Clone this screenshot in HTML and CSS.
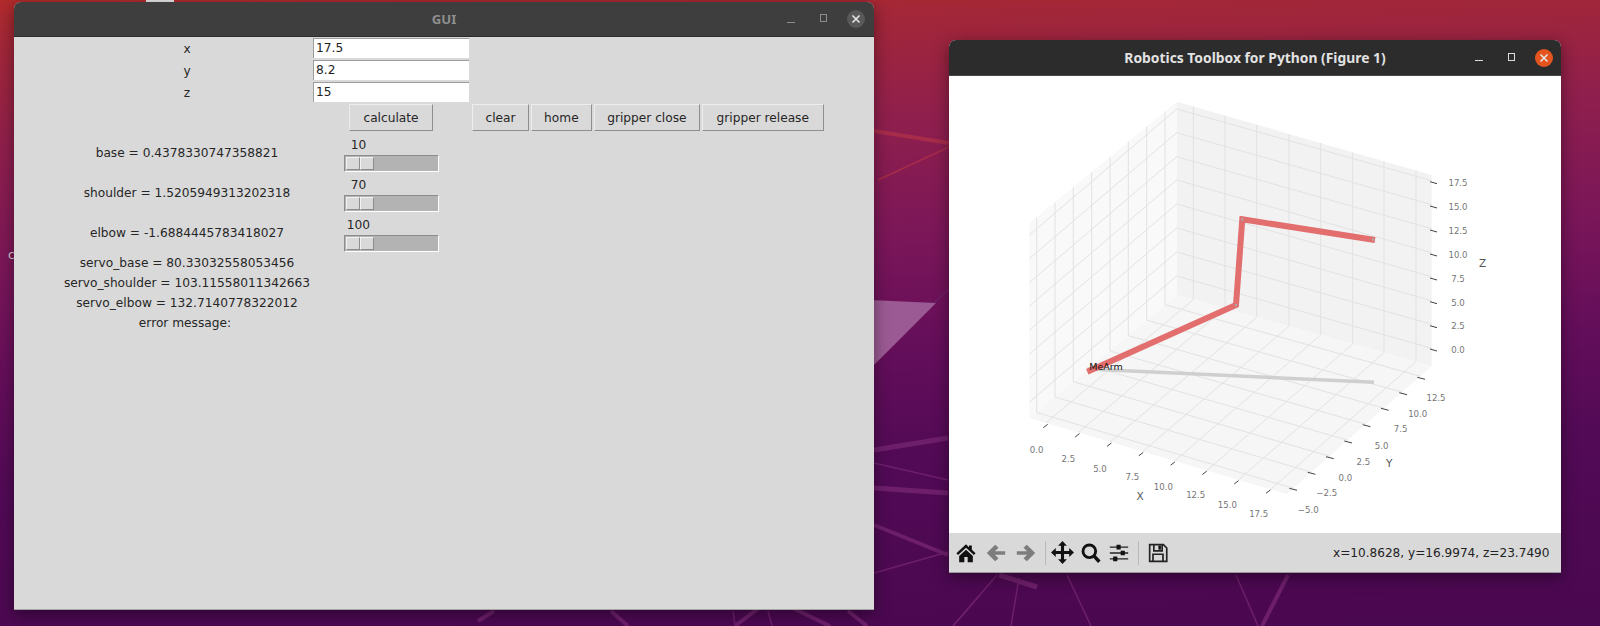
FILE: index.html
```html
<!DOCTYPE html>
<html lang="en">
<head>
<meta charset="utf-8">
<title>Desktop</title>
<link rel="stylesheet" href="styles.css">
</head>
<body>
<main class="desktop">
  <svg class="wallpaper" viewBox="0 0 1600 626" aria-hidden="true">
    <polygon class="wp-glass" points="870,300 936,303 870,369"/>
    <g class="wp-band">
      <path class="w5" d="M874 450L948 438"/>
      <path class="w2" d="M874 463L948 480"/>
      <path class="w5" d="M874 488L948 493"/>
      <path class="w4" d="M874 525L948 555"/>
      <path class="w2" d="M874 573L948 552"/>
      <path class="w2" d="M934 303L950 288"/>
      <path class="w5" d="M999 575L1037 587"/>
      <path class="w2" d="M997 575L953 626"/>
      <path class="w2" d="M1019 578L1011 626"/>
      <path class="w2" d="M1067 575L1091 626"/>
      <path class="w2" d="M1236 575L1258 626"/>
      <path class="w4" d="M1288 575L1262 626"/>
      <path class="w4" d="M494 611L478 621"/>
      <path class="w4" d="M611 611L628 626"/>
      <path class="w4" d="M735 626L772 598L830 626"/>
      <path class="w2" d="M733 611L735 626"/>
      <path class="w2" d="M768 611L772 626"/>
      <path class="w4" d="M848 611L867 626"/>
      <path class="w2" d="M979 596L953 626"/>
    </g>
    <path class="wp-red" d="M874 131L949 143"/>
    <path class="wp-red thin" d="M878 180L949 147"/>
  </svg>
  <div class="peek-tab"></div>
  <span class="peek-letter">c</span>

  <section class="window gui-window">
    <header class="titlebar gui-bar">
      <span></span>
      <h1 class="title gui-title">GUI</h1>
      <div class="controls">
        <span class="ctl"><i class="ctl-min"></i></span>
        <span class="ctl"><i class="ctl-max"></i></span>
        <span class="ctl ctl-close gui-close">
          <svg viewBox="0 0 10 10" class="ctl-x"><path d="M1.5 1.5L8.5 8.5M8.5 1.5L1.5 8.5"/></svg>
        </span>
      </div>
    </header>
    <div class="gui-body">
      <div class="lbl r1">x</div>
      <div class="entry r1">17.5</div>
      <div class="lbl r2">y</div>
      <div class="entry r2">8.2</div>
      <div class="lbl r3">z</div>
      <div class="entry r3">15</div>

      <div class="btn btn-calc r4">calculate</div>
      <div class="btn-row r4">
        <div class="btn">clear</div>
        <div class="btn">home</div>
        <div class="btn">gripper close</div>
        <div class="btn btn-last">gripper release</div>
      </div>

      <div class="lbl r5">base = 0.4378330747358821</div>
      <div class="scale r5">
        <div class="scale-value">10</div>
        <div class="trough"><div class="handle"><span></span><span></span></div></div>
      </div>
      <div class="lbl r6">shoulder = 1.5205949313202318</div>
      <div class="scale r6">
        <div class="scale-value">70</div>
        <div class="trough"><div class="handle"><span></span><span></span></div></div>
      </div>
      <div class="lbl r7">elbow = -1.6884445783418027</div>
      <div class="scale r7">
        <div class="scale-value">100</div>
        <div class="trough"><div class="handle"><span></span><span></span></div></div>
      </div>

      <div class="lbl r8">servo_base = 80.33032558053456</div>
      <div class="lbl r9">servo_shoulder = 103.11558011342663</div>
      <div class="lbl r10">servo_elbow = 132.7140778322012</div>
      <div class="lbl lbl-error r11">error message:</div>
    </div>
  </section>

  <section class="window fig-window">
    <header class="titlebar fig-bar">
      <span></span>
      <h2 class="title fig-title">Robotics Toolbox for Python (Figure 1)</h2>
      <div class="controls">
        <span class="ctl"><i class="ctl-min bright"></i></span>
        <span class="ctl"><i class="ctl-max bright"></i></span>
        <span class="ctl ctl-close fig-close">
          <svg viewBox="0 0 10 10" class="ctl-x"><path d="M1.5 1.5L8.5 8.5M8.5 1.5L1.5 8.5"/></svg>
        </span>
      </div>
    </header>
    <svg class="plot" viewBox="949 76 612 457" role="img" aria-label="3D plot of the MeArm">
      <polygon class="pane-left" points="1176.7,101.7 1029.3,223.3 1029.3,418 1176.7,295"/>
      <polygon class="pane-right" points="1176.7,101.7 1431.7,175 1431.7,366 1176.7,295"/>
      <polygon class="pane-floor" points="1176.7,295 1431.7,366 1286.7,494 1029.3,418"/>
      <path class="grid" d="M1193.3 106.5V299.6L1046.7 422.2M1225 115.6V308.4L1078.5 432.4M1256.7 124.6V317.2L1110.3 441.8M1289 134V326.2L1143 451.4M1320.7 143V335L1174.8 460.9M1352.7 152.3V344L1207 470.4M1384 161.3V352.7L1238.7 479.8M1416 170.5V361.6L1270.8 489.3"/>
      <path class="grid" d="M1165 111.4V304.8L1420.1 376.2M1146.7 126.6V320.2L1402 392.2M1128.3 141.8V335.6L1383.9 408.2M1110 157V351L1365.7 424.2M1091.7 172.2V366.3L1347.6 440.2M1073.3 187.4V381.7L1329.5 456.2M1055 202.6V397.1L1311.4 472.2M1036.7 217.8V412.5L1293.2 488.2"/>
      <path class="grid" d="M1431.7 180.7L1176.7 109L1029.3 235M1431.7 204.7L1176.7 132.7L1029.3 258.7M1431.7 228.7L1176.7 156.7L1029.3 282.7M1431.7 252.7L1176.7 180L1029.3 306M1431.7 276.7L1176.7 204L1029.3 330M1431.7 300.7L1176.7 228L1029.3 354M1431.7 324.3L1176.7 252L1029.3 378M1431.7 348.3L1176.7 276L1029.3 402"/>

      <path class="ticks" d="M1430 181.7l7 2M1430 206l7 2M1430 230l7 2M1430 254l7 2M1430 278l7 2M1430 301.7l7 2M1430 325.7l7 2M1430 349l7 2"/>
      <path class="ticks" d="M1417.3 377.3l7.7 2M1399.3 392.7l7.7 2M1381 408.3l7.7 2M1362.7 424.7l7.7 2M1344.3 441l7.7 2M1326 456.7l7.7 2M1307.7 472.3l7.7 2M1289.3 488.3l7.7 2"/>
      <path class="ticks" d="M1043.3 427.7l4.4-3.4M1075.1 437l4.4-3.4M1107 446.4l4.4-3.4M1138.8 455.8l4.4-3.4M1170.6 465.2l4.4-3.4M1202.4 474.5l4.4-3.4M1234.2 484l4.4-3.4M1266 493.3l4.4-3.4"/>

      <path class="shadow-arm" d="M1087.3 369L1374 382.3"/>
      <path class="arm" d="M1087.3 371.7L1236 305L1242.3 219.3L1375 240"/>
      <g class="joints">
        <circle cx="1236" cy="305" r="1.2"/>
        <circle cx="1242.3" cy="219.5" r="1.2"/>
        <circle cx="1373" cy="239.5" r="1.2"/>
      </g>
      <text class="arm-name" x="1089.3" y="370">MeArm</text>

      <g class="tick-text">
        <text x="1458" y="183.3">17.5</text><text x="1458" y="207">15.0</text><text x="1458" y="231">12.5</text><text x="1458" y="255">10.0</text>
        <text x="1458" y="279">7.5</text><text x="1458" y="302.7">5.0</text><text x="1458" y="326.3">2.5</text><text x="1458" y="350.3">0.0</text>
        <text x="1436" y="398">12.5</text><text x="1417.7" y="414">10.0</text><text x="1400.7" y="429.3">7.5</text><text x="1381.7" y="445.7">5.0</text>
        <text x="1363.3" y="462">2.5</text><text x="1345.3" y="478">0.0</text><text x="1326.7" y="493.3">−2.5</text><text x="1308.3" y="509.7">−5.0</text>
        <text x="1036.7" y="449.7">0.0</text><text x="1068.3" y="459.3">2.5</text><text x="1100" y="468.7">5.0</text><text x="1132.3" y="477.3">7.5</text>
        <text x="1163.3" y="486.7">10.0</text><text x="1195.7" y="495">12.5</text><text x="1227.3" y="505">15.0</text><text x="1258.7" y="514.3">17.5</text>
      </g>
      <g class="axis-text">
        <text x="1482.6" y="263">Z</text>
        <text x="1389.3" y="462.7">Y</text>
        <text x="1140" y="495.7">X</text>
      </g>
    </svg>
    <footer class="toolbar">
      <div class="tool-group wide">
        <span class="tool"><svg viewBox="0 0 24 24" class="ico"><path class="ink" d="M12 1.5L.5 12.2l2 2.2L12 5.6l9.5 8.8 2-2.2-4.5-4.2V3h-3.400v2L12 1.500zM12 8.200L3.800 15.600V23H10v-6.200h4V23h6.200v-7.400L12 8.200z"/></svg></span>
        <span class="tool"><svg viewBox="0 0 24 24" class="ico"><path class="ink-gray" d="M1 12L11 2l4 3.600-4.400 4.200H23v4.400H10.600l4.400 4.200L11 22z"/></svg></span>
        <span class="tool"><svg viewBox="0 0 24 24" class="ico"><path class="ink-gray" d="M23 12L13 2 9 5.600l4.400 4.200H1v4.400h12.400L9 18.400l4 3.600z"/></svg></span>
      </div>
      <span class="tool-sep first"></span>
      <div class="tool-group">
        <span class="tool"><svg viewBox="0 0 24 24" class="ico ico-move"><path class="ink" d="M12 0l4.600 5h-3v5.400H19v-3l5 4.600-5 4.600v-3h-5.400V19h3L12 24l-4.600-5h3v-5.400H5v3L0 12l5-4.600v3h5.400V5h-3z"/></svg></span>
        <span class="tool"><svg viewBox="0 0 24 24" class="ico"><circle class="line-heavy" cx="10" cy="10" r="7.600"/><path class="line-bold" d="M15.500 15.500L22 22.500"/></svg></span>
        <span class="tool"><svg viewBox="0 0 24 24" class="ico"><path class="line-thin" d="M1 5h22M1 12h22M1 19h22"/><path class="ink" d="M9 2.200h5v5.600H9zM14 9.200h5v5.600h-5zM5 16.200h5v5.600H5z"/></svg></span>
      </div>
      <span class="tool-sep second"></span>
      <span class="tool"><svg viewBox="0 0 24 24" class="ico"><path class="line-save" d="M2 2h16.500L22.500 6V22H2zM7 2v7.500h10V2M6 22v-8.500h12V22"/><path class="ink" d="M12.500 3h3v5h-3z"/></svg></span>
      <span class="status">x=10.8628, y=16.9974, z=23.7490</span>
    </footer>
  </section>
</main>
</body>
</html>
```
FILE: styles.css
```css
* { box-sizing: border-box; }
html, body { margin: 0; padding: 0; height: 100%; overflow: hidden; }
body { font-family: "DejaVu Sans", sans-serif; font-size: 12.2px; color: #262626; }

.desktop {
  position: relative;
  width: 1600px;
  height: 626px;
  overflow: hidden;
  background: linear-gradient(178deg, #b22b2b 0, #a32737 6%, #8f1f4d 22%, #7a1659 40%, #650e5a 55%, #520a56 72%, #4a0850 100%);
}
.wallpaper { position: absolute; inset: 0; width: 1600px; height: 626px; }
.wp-glass { fill: #9c5a94; }
.wp-band path { fill: none; stroke: #6e1f6b; }
.wp-band .w2 { stroke-width: 1.5; }
.wp-band .w4 { stroke-width: 4; }
.wp-band .w5 { stroke-width: 5; }
.wp-red { fill: none; stroke: #a62c4a; stroke-width: 4; }
.wp-red.thin { stroke-width: 1.5; }
.peek-tab { position: absolute; left: 146px; top: 0; width: 28px; height: 2px; background: #e8e8e8; }
.peek-letter { position: absolute; left: 8px; top: 248px; font-size: 12px; color: #d8d0d8; }

.window { position: absolute; display: flex; flex-direction: column; border-radius: 7px 7px 0 0; overflow: hidden; box-shadow: 0 4px 16px rgba(0, 0, 0, .42); }
.gui-window { left: 14px; top: 2px; width: 860px; height: 608px; background: #d9d9d9; border-bottom: 1px solid #a4a4a4; }
.fig-window { left: 949px; top: 40px; width: 612px; height: 533px; background: #fff; border-bottom: 1px solid #999; }

.titlebar { display: grid; grid-template-columns: 1fr auto 1fr; align-items: center; flex: none; }
.gui-bar { height: 35px; background: #3e3e3e; border-bottom: 1px solid #2b2b2b; padding: 0 9px; }
.fig-bar { height: 36px; background: #2c2c2c; border-bottom: 1px solid #474747; padding: 0 8.5px; }
.title { margin: 0; font-family: "Noto Sans", sans-serif; font-weight: 700; }
.gui-title { color: #8f8f8f; font-size: 13.2px; }
.fig-title { color: #e2e2e2; font-size: 13.85px; }
.controls { display: flex; justify-content: flex-end; gap: 14.5px; align-items: center; }
.ctl { width: 18px; height: 18px; display: flex; align-items: center; justify-content: center; border-radius: 50%; }
.ctl-min { display: block; width: 8px; height: 1px; background: #8d8d8d; margin-top: 6px; }
.ctl-max { display: block; width: 7px; height: 8px; border: 1px solid #8d8d8d; margin-top: -2px; }
.ctl-min.bright { background: #dcdcdc; }
.ctl-max.bright { border-color: #dcdcdc; }
.gui-close { background: #595959; }
.fig-close { background: #e4541f; }
.ctl-x { width: 10px; height: 10px; fill: none; stroke: #e6e6e6; stroke-width: 1.6; }

.gui-body {
  flex: 1;
  display: grid;
  padding: 1px 0 0 50px;
  grid-template-columns: 246px 156px 1fr;
  column-gap: 3px;
  grid-template-rows: 22px 22px 22px 29px 40px 40px 40px 19.5px 20px 20px 21.5px 1fr;
}
.r1 { grid-row: 1; } .r2 { grid-row: 2; } .r3 { grid-row: 3; } .r4 { grid-row: 4; }
.r5 { grid-row: 5; } .r6 { grid-row: 6; } .r7 { grid-row: 7; } .r8 { grid-row: 8; }
.r9 { grid-row: 9; } .r10 { grid-row: 10; } .r11 { grid-row: 11; }

.lbl { grid-column: 1; display: flex; align-items: center; justify-content: center; white-space: nowrap; }
.lbl-error { padding-right: 4px; }
.entry {
  grid-column: 2;
  height: 20px;
  padding-left: 2px;
  line-height: 19px;
  background: #fff;
  border-top: 1px solid #9d9d9d;
  border-left: 1px solid #9d9d9d;
  color: #222;
}
.btn {
  height: 27px;
  padding: 0 12.5px;
  display: flex;
  align-items: center;
  justify-content: center;
  white-space: nowrap;
  background: #d9d9d9;
  border: 1px solid;
  border-color: #ededed #8f8f8f #8f8f8f #ededed;
}
.btn-calc { grid-column: 2; justify-self: center; width: 84px; }
.btn-last { padding: 0 14px; }
.btn-row { grid-column: 3; display: flex; gap: 1.5px; align-items: flex-start; }

.scale { grid-column: 2; justify-self: center; width: 95px; padding-top: 2px; }
.scale-value { width: 30px; height: 20px; line-height: 20px; text-align: center; }
.trough {
  height: 17px;
  padding: 1px;
  background: #b3b3b3;
  border: 1px solid;
  border-color: #8c8c8c #fff #fff #8c8c8c;
}
.handle { display: flex; width: 28px; height: 13px; }
.handle span { flex: 1; background: #d9d9d9; border: 1px solid; border-color: #f2f2f2 #8c8c8c #8c8c8c #f2f2f2; }

.plot { display: block; flex: none; width: 612px; height: 457px; background: #fff; }
.pane-left { fill: #f9f9f9; }
.pane-right { fill: #f2f2f2; }
.pane-floor { fill: #f6f6f6; }
.grid { fill: none; stroke: #e2e2e2; stroke-width: 1; }
.ticks { fill: none; stroke: #444; stroke-width: 1; }
.arm { fill: none; stroke: #e26e6e; stroke-width: 6; stroke-linejoin: miter; }
.shadow-arm { fill: none; stroke: #cfcfcf; stroke-width: 3.5; }
.joints circle { fill: #a9a9a9; }
.arm-name { font-size: 9.5px; fill: #111; }
.tick-text text { font-size: 8.6px; fill: #767676; text-anchor: middle; dominant-baseline: central; }
.axis-text text { font-size: 10.5px; fill: #555; text-anchor: middle; dominant-baseline: central; }

.toolbar { flex: none; height: 39px; display: flex; align-items: center; padding-left: 3px; background: #d9d9d9; }
.tool-group { display: flex; }
.tool-group.wide { gap: 1.9px; }
.tool { width: 28px; height: 24px; display: flex; align-items: center; justify-content: center; }
.ico { width: 20px; height: 20px; display: block; }
.ico-move { width: 23px; height: 23px; }
.ink { fill: #111; }
.ink-gray { fill: #7d7d7d; }
.line-heavy { fill: none; stroke: #111; stroke-width: 3.4; }
.line-bold { fill: none; stroke: #111; stroke-width: 4.2; }
.line-thin { fill: none; stroke: #222; stroke-width: 1.6; }
.line-save { fill: none; stroke: #222; stroke-width: 2; }
.tool-sep { flex: none; width: 1px; height: 24px; background: #b9b9b9; }
.tool-sep.first { margin: 0 2.5px 0 5.5px; }
.tool-sep.second { margin: 0 5px; }
.status { margin-left: auto; padding-right: 11.5px; font-size: 12.1px; white-space: nowrap; color: #222; }
```
